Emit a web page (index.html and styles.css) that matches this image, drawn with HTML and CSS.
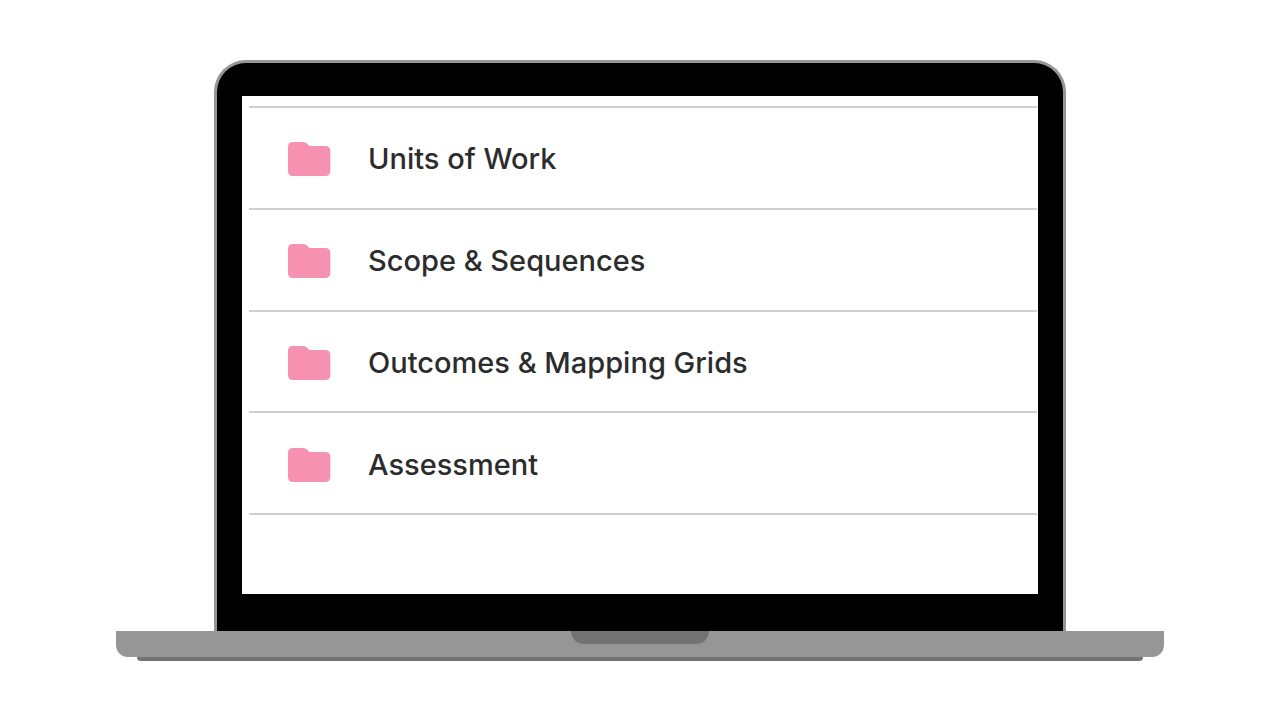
FILE: index.html
```html
<!DOCTYPE html>
<html lang="en">
<head>
  <meta charset="utf-8">
  <meta name="viewport" content="width=device-width, initial-scale=1">
  <title>Folders</title>
  <link rel="stylesheet" href="styles.css">
</head>
<body>
  <svg class="symbols" aria-hidden="true">
    <symbol id="folder" viewBox="0 0 44 36">
      <path d="M6 1H15.500Q18 1 19.500 2.300L22.500 5H38Q43.300 5 43.300 10V30Q43.300 35 38 35H6Q1 35 1 30V6Q1 1 6 1Z"/>
    </symbol>
  </svg>
  <main class="laptop">
    <div class="lid">
      <div class="screen">
        <ul class="folders">
          <li class="folder"><svg class="icon" aria-hidden="true"><use href="#folder"/></svg><span>Units of Work</span></li>
          <li class="folder"><svg class="icon" aria-hidden="true"><use href="#folder"/></svg><span>Scope &amp; Sequences</span></li>
          <li class="folder"><svg class="icon" aria-hidden="true"><use href="#folder"/></svg><span>Outcomes &amp; Mapping Grids</span></li>
          <li class="folder"><svg class="icon" aria-hidden="true"><use href="#folder"/></svg><span>Assessment</span></li>
        </ul>
      </div>
    </div>
    <div class="base"><div class="notch"></div></div>
    <div class="foot"></div>
  </main>
</body>
</html>
```
FILE: styles.css
```css
* {
  box-sizing: border-box;
}

body {
  margin: 0;
  padding: 60px 24px;
  background: #fff;
  color: #2b2c2d;
  font-family: Inter, Roboto, sans-serif;
}

.symbols {
  display: none;
}

.laptop {
  max-width: 1048px;
  margin: 0 auto;
}

.lid {
  max-width: 852px;
  margin: 0 auto;
  padding: 33px 25px 37px;
  border: 3px solid #969696;
  border-bottom: 0;
  border-radius: 32px 32px 0 0;
  background: #000;
}

.screen {
  min-height: 498px;
  padding: 10px 1px 0 7px;
  background: #fff;
}

.folders {
  display: grid;
  grid-auto-rows: 1fr;
  min-height: 409px;
  margin: 0;
  padding: 0;
  border-top: 2px solid #d0d0d0;
  list-style: none;
}

.folder {
  display: flex;
  align-items: center;
  gap: 37px;
  padding: 3px 38px 0;
  border-bottom: 2px solid #d0d0d0;
  font-size: 29px;
  font-weight: 500;
  line-height: 36px;
}

.icon {
  flex: none;
  width: 44px;
  height: 36px;
  fill: #f791b1;
}

.base {
  height: 26px;
  border-radius: 0 0 12px 12px;
  background: #969696;
}

.notch {
  width: 138px;
  height: 13px;
  margin: 0 auto;
  border-radius: 0 0 13px 13px;
  background: #737373;
}

.foot {
  height: 4px;
  margin: 0 21px;
  border-radius: 0 0 4px 4px;
  background: #737373;
}
```
